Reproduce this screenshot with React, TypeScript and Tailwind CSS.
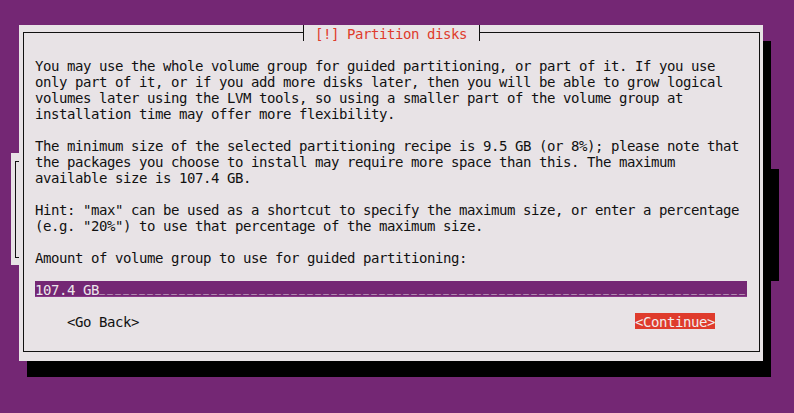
import React from "react";

const mono = "font-['DejaVu_Sans_Mono',_'Liberation_Mono',_monospace] text-[14px] leading-[16px] tracking-[-0.43px] whitespace-pre";

const intro = [
  "You may use the whole volume group for guided partitioning, or part of it. If you use",
  "only part of it, or if you add more disks later, then you will be able to grow logical",
  "volumes later using the LVM tools, so using a smaller part of the volume group at",
  "installation time may offer more flexibility.",
];

const sizes = [
  "The minimum size of the selected partitioning recipe is 9.5 GB (or 8%); please note that",
  "the packages you choose to install may require more space than this. The maximum",
  "available size is 107.4 GB.",
];

const hint = [
  'Hint: "max" can be used as a shortcut to specify the maximum size, or enter a percentage',
  '(e.g. "20%") to use that percentage of the maximum size.',
];

function Para({ lines }: { lines: string[] }) {
  return (
    <div>
      {lines.map((t) => (
        <div key={t} className="h-[16px]"><span className="relative top-[1px]">{t}</span></div>
      ))}
    </div>
  );
}

export default function App() {
  const value = "107.4 GB";
  const fill = "_".repeat(89 - value.length);

  return (
    <div className={`relative w-[794px] h-[413px] overflow-hidden bg-[#742774] text-[#111] ${mono}`}>
      {/* window behind the dialog */}
      <div className="absolute left-[11px] top-[153px] w-[760px] h-[112px] bg-[#e8e3e6] shadow-[8px_16px_0_0_#000] pl-[4px] pt-[8px]">
        <div className="h-[97px] w-[4px] border-l border-t border-b border-[#111]" />
      </div>

      <div className="pt-[25px] pl-[19px]">
        <div className="relative z-10 w-[744px] h-[336px] bg-[#e8e3e6] shadow-[8px_16px_0_0_#000] pt-[7px] pl-[4px] pr-[3px] pb-[9px]">
          <div className="h-full border border-[#111] pl-[11px] pt-[24px] flex flex-col gap-[16px]">
            <Para lines={intro} />
            <Para lines={sizes} />
            <Para lines={hint} />
            <Para lines={["Amount of volume group to use for guided partitioning:"]} />
            <div className="h-[16px] w-[712px] overflow-hidden bg-[#742774] text-[#ece6ea] border-b border-[#8a3a8a]">
              <span className="relative top-[1px]">{value}</span>
              <span className="relative top-[-2px] text-[10px] tracking-[1.98px]">{fill}</span>
            </div>
            <div className="h-[16px] w-[712px] px-[32px] flex justify-between">
              <span className="relative top-[1px]">&lt;Go Back&gt;</span>
              <span className="bg-[#df3b2c] text-[#f2ecee]">
                <span className="relative top-[1px]">&lt;Continue&gt;</span>
              </span>
            </div>
          </div>

          {/* title sitting on the top border */}
          <div className="absolute inset-x-0 top-0 flex justify-center">
            <div className="w-[177px] h-[16px] bg-[#e8e3e6] border-l border-r border-[#111] flex justify-center text-[#df3b2c]">
              <span className="relative top-[1px]">[!] Partition disks</span>
            </div>
          </div>
        </div>
      </div>
    </div>
  );
}
